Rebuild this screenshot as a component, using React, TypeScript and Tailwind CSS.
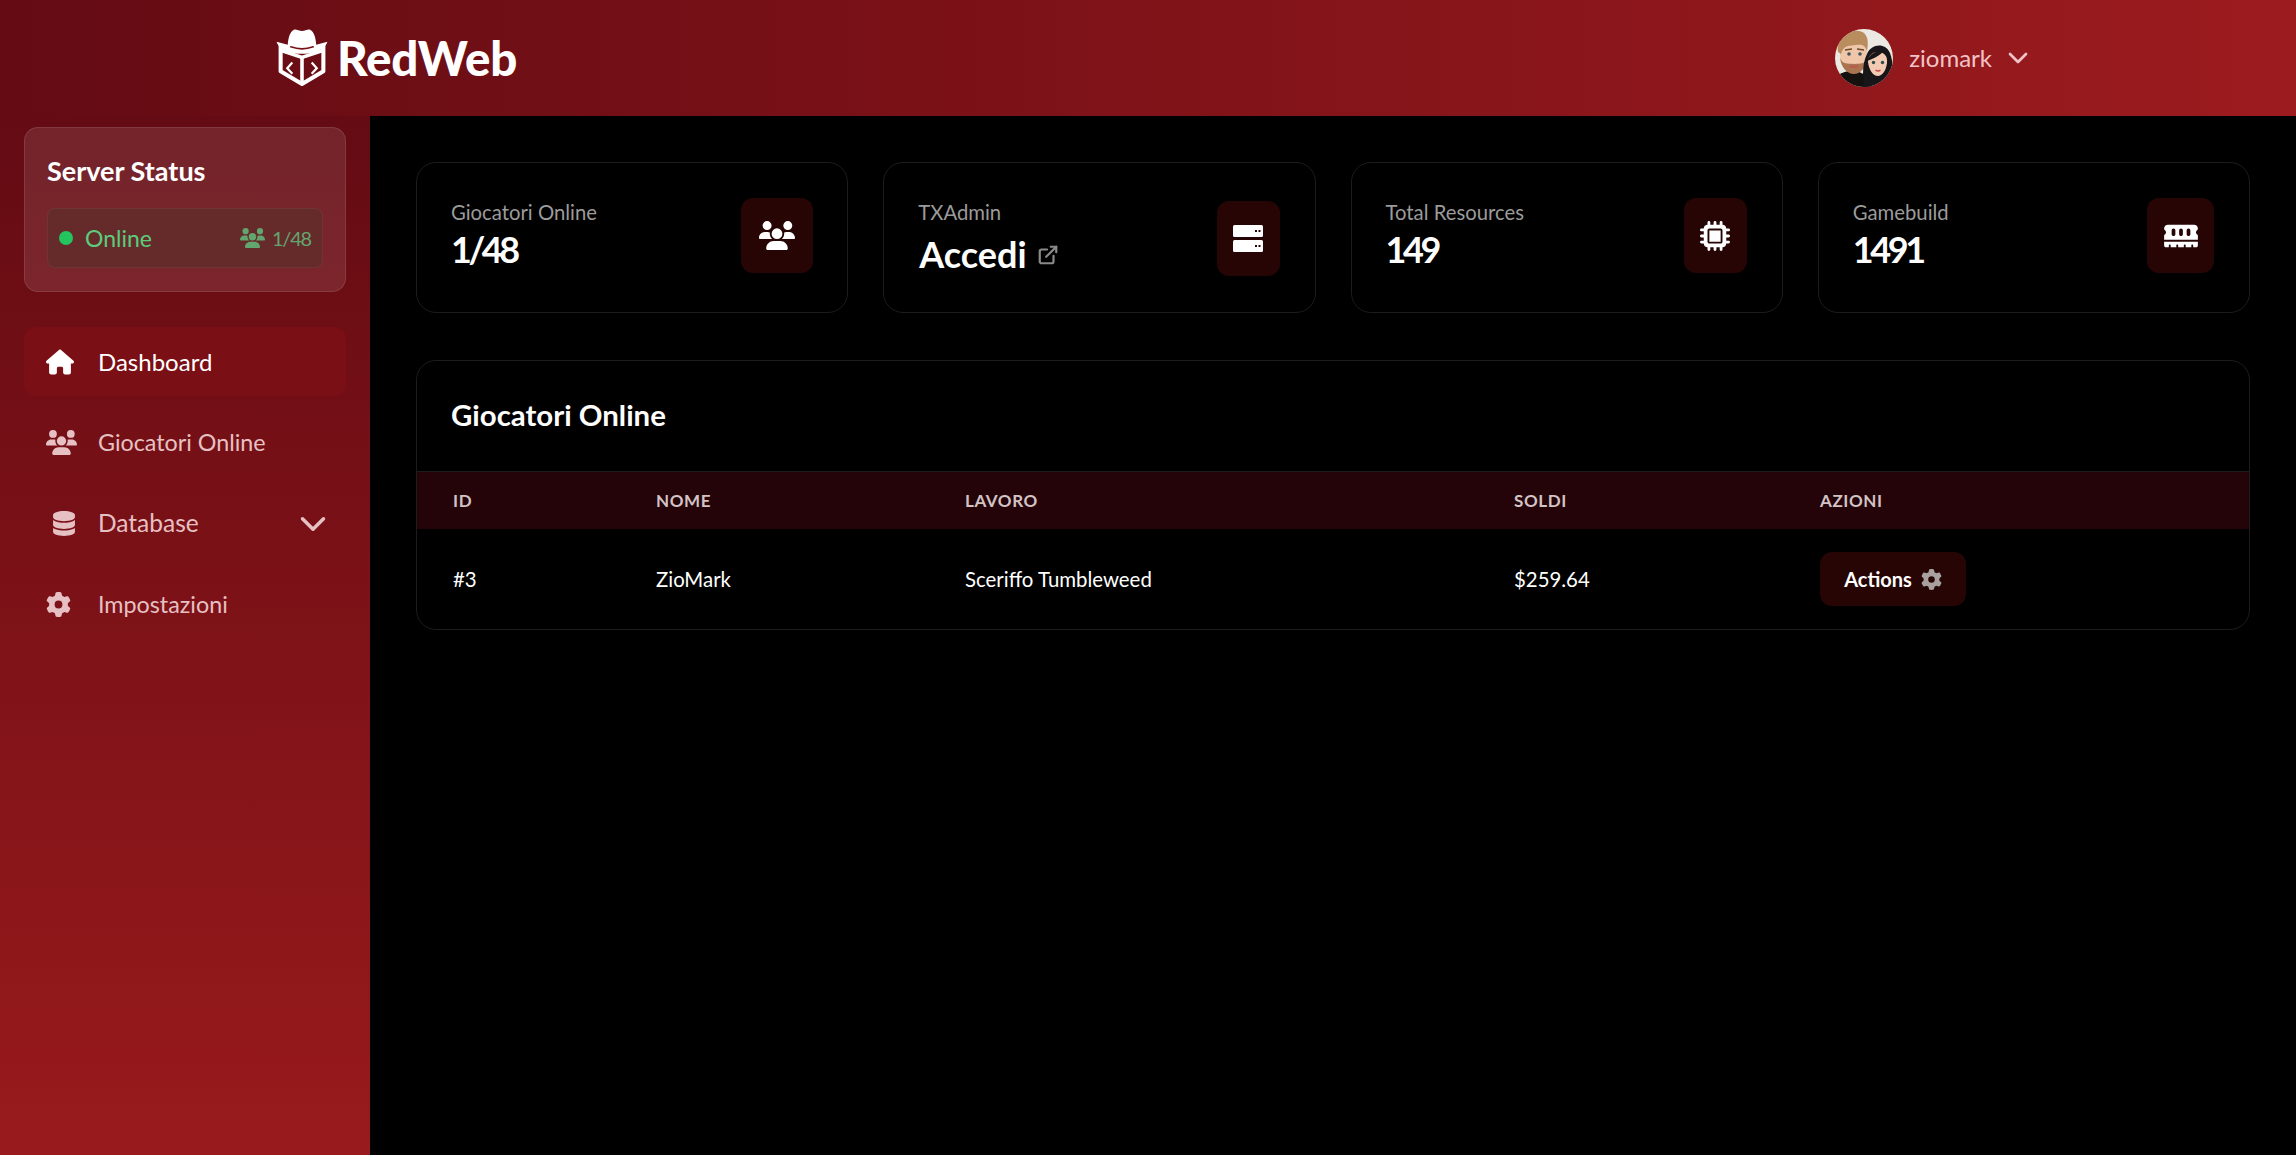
import { ReactNode } from 'react'
import { FaDatabase, FaGear, FaHouse, FaMemory, FaMicrochip, FaUsers } from 'react-icons/fa6'
import { ChevronDown, ExternalLink } from 'lucide-react'

function Logo() {
    return (
        <svg className="w-[52px] h-[58px] shrink-0" viewBox="0 0 50 57" fill="none">
            {/* box */}
            <path d="M4 16V41.5L25 54L46 41.5V16" stroke="#fff" strokeWidth="4" strokeLinejoin="round" />
            <path d="M25 28V54" stroke="#fff" strokeWidth="3.5" />
            <path d="M4 21L25 28L46 21" stroke="#fff" strokeWidth="3.5" />
            <path d="M15.5 33L10.5 38.5L15.5 44" stroke="#fff" strokeWidth="2.2" />
            <path d="M34.5 33L39.5 38.5L34.5 44" stroke="#fff" strokeWidth="2.2" />
            {/* hat */}
            <path
                d="M0 12.5L11 15.5C11.5 9 13 3 17 .8C19 -.2 22 2 25 2C28 2 31 -.2 33 .8C37 3 38.5 9 39 15.5L50 12.5C48 18 44 21 38 22.5C30 25 20 25 12 22.5C6 21 2 18 0 12.5Z"
                fill="#fff"
            />
            <path d="M14 17.5Q25 21.5 36 17.5" stroke="#7a0f16" strokeWidth="1.6" strokeLinecap="round" />
        </svg>
    )
}

function Avatar() {
    return (
        <svg className="w-[58px] h-[58px] rounded-full shrink-0" viewBox="0 0 58 58">
            <rect width="58" height="58" fill="#ece9e2" />
            {/* man */}
            <path d="M2 58V47C7 43 12 42 18 42C24 42 30 45 35 51L37 58Z" fill="#15110f" />
            <path d="M5 25C5 14 13 9 20 9C27 9 32 15 32 25C32 36 27 43 19 43C11 43 5 36 5 25Z" fill="#f0c6a8" />
            <path d="M5 29C6 38 12 45 19 45C26 45 31 38 32 29C30 36 26 34 19 35C12 34 8 36 5 29Z" fill="#a9744f" />
            <path d="M15 37Q19 39 23 37" stroke="#c2524e" strokeWidth="1.6" fill="none" />
            <path d="M3 23C1 10 13 0 24 2C33 3 34 13 32 22C30 16 27 15 21 16C15 17 9 15 6 25Z" fill="#b98d5e" />
            <path d="M10 21L17 20M22 20L29 21" stroke="#6b4a2c" strokeWidth="1.4" />
            <circle cx="14" cy="25" r="1.8" fill="#3a5560" />
            <circle cx="25" cy="25" r="1.8" fill="#3a5560" />
            {/* woman */}
            <path d="M29 58C27 44 28 33 32 25C36 15 50 13 55 24C59 34 58 48 56 58Z" fill="#181618" />
            <path d="M33 33C33 26 38 23 43 23C49 23 53 27 52 34C51 42 47 47 43 47C38 47 34 41 33 33Z" fill="#f3cbb3" />
            <path d="M32 32C34 26 40 21 48 23C44 27 38 30 32 32Z" fill="#181618" />
            <circle cx="38.5" cy="33.5" r="1.7" fill="#2f4a4d" />
            <circle cx="47.5" cy="33.5" r="1.7" fill="#2f4a4d" />
            <path d="M40.5 41Q43 43 45.5 41" stroke="#c9474f" strokeWidth="1.5" fill="none" />
        </svg>
    )
}

function ServerIcon() {
    return (
        <svg className="w-[30px] h-[27px]" viewBox="0 0 30 27">
            <rect y="0" width="30" height="12" rx="1.5" fill="#fff" />
            <rect y="15" width="30" height="12" rx="1.5" fill="#fff" />
            <rect x="22" y="5" width="2" height="2" fill="#270505" />
            <rect x="25.5" y="5" width="2" height="2" fill="#270505" />
            <rect x="22" y="20" width="2" height="2" fill="#270505" />
            <rect x="25.5" y="20" width="2" height="2" fill="#270505" />
        </svg>
    )
}

function Header() {
    return (
        <header className="h-[116px] shrink-0 flex items-center bg-gradient-to-r from-[#640b13] to-[#9c1b1e]">
            <div className="ml-[276px] flex items-center gap-[9px]">
                <Logo />
                <span className="text-[47.5px] leading-none font-black text-white tracking-[-0.2px]">RedWeb</span>
            </div>
            <div className="ml-auto mr-[262px] flex items-center">
                <Avatar />
                <span className="ml-[16px] text-[24px] font-normal text-[#f2c4c8]">ziomark</span>
                <ChevronDown className="ml-[10px] w-[32px] h-[32px] text-[#f2c4c8]" strokeWidth={2} />
            </div>
        </header>
    )
}

function ServerStatus() {
    return (
        <div className="h-[165px] rounded-[14px] border border-white/10 bg-white/10 px-[22px] pt-[25px]">
            <h3 className="text-[27px] leading-[36px] font-bold text-white">Server Status</h3>
            <div className="mt-[19px] h-[60px] rounded-[8px] border border-white/5 bg-[#652b2b] flex items-center pl-[11px] pr-[11px]">
                <span className="w-[14px] h-[14px] rounded-full bg-[#22c55e]" />
                <span className="ml-[12px] text-[23px] text-[#5ccb7c]">Online</span>
                <FaUsers className="ml-auto w-[25px] h-[20px] text-[#63a56e]" />
                <span className="ml-[7px] text-[20px] tracking-[-1.2px] text-[#63a56e]">1/48</span>
            </div>
        </div>
    )
}

interface NavItemProps {
    label: string
    icon: ReactNode
    active?: boolean
    chevron?: boolean
    textClass?: string
}

function NavItem({ label, icon, active, chevron, textClass = 'text-[23.3px]' }: NavItemProps) {
    return (
        <div className={`h-[69px] rounded-[12px] flex items-center pl-[22px] pr-[12px] ${active ? 'bg-[#7a0f15] text-white' : 'text-[#e7c0c3]'}`}>
            <span className="w-[52px] flex items-center">{icon}</span>
            <span className={textClass}>{label}</span>
            {chevron && <ChevronDown className="ml-auto w-[42px] h-[42px]" strokeWidth={2} />}
        </div>
    )
}

function Sidebar() {
    return (
        <aside className="w-[370px] shrink-0 flex flex-col bg-gradient-to-b from-[#640b13] to-[#991a1c] px-[24px] pt-[11px]">
            <ServerStatus />
            <nav className="mt-[35px] flex flex-col gap-[12px]">
                <NavItem active label="Dashboard" textClass="text-[24px]" icon={<FaHouse className="w-[28px] h-[26px]" />} />
                <NavItem label="Giocatori Online" icon={<FaUsers className="w-[31px] h-[25px]" />} />
                <NavItem chevron label="Database" textClass="text-[24.5px]" icon={<FaDatabase className="ml-[7px] w-[22px] h-[25px]" />} />
                <NavItem label="Impostazioni" icon={<FaGear className="w-[25px] h-[25px]" />} />
            </nav>
        </aside>
    )
}

interface StatCardProps {
    label: string
    value: string
    icon: ReactNode
    boxClass: string
    link?: boolean
}

function StatCard({ label, value, icon, boxClass, link }: StatCardProps) {
    return (
        <div className="h-[151px] rounded-[20px] border border-[#1c1c1c] flex items-start justify-between pl-[34px] pr-[35px] pt-[35px]">
            <div>
                <div className="text-[20.3px] leading-[28px] text-[#9b9b9b]">{label}</div>
                {link ? (
                    <div className="mt-[6px] flex items-center gap-[10px] text-white">
                        <span className="pl-[1px] text-[36px] leading-[44px] font-bold">{value}</span>
                        <ExternalLink className="w-[22px] h-[22px] text-[#8a8a8a] mt-[2px]" strokeWidth={2.4} />
                    </div>
                ) : (
                    <div className="mt-[2px] text-[36px] leading-[42px] font-bold tracking-[-3.4px] text-white">{value}</div>
                )}
            </div>
            <div className={`rounded-[12px] bg-[#270505] flex items-center justify-center text-white ${boxClass}`}>{icon}</div>
        </div>
    )
}

function PlayersTable() {
    const headCell = 'pl-[36px] text-[17px] font-bold tracking-[0.6px] text-[#d3c3c4]'
    const bodyCell = 'pl-[36px] text-[20.4px] text-white'
    return (
        <section className="mt-[47px] rounded-[20px] border border-[#1c1c1c] overflow-hidden">
            <div className="h-[110px] flex items-center pl-[34px] pb-[1px]">
                <h2 className="text-[29.4px] font-bold text-white">Giocatori Online</h2>
            </div>
            <div className="h-[58px] grid grid-cols-[203px_309px_549px_306px_1fr] items-center bg-[#240408] border-t border-[#1c1c1c]">
                <div className={headCell}>ID</div>
                <div className={headCell}>NOME</div>
                <div className={headCell}>LAVORO</div>
                <div className={headCell}>SOLDI</div>
                <div className={headCell}>AZIONI</div>
            </div>
            <div className="h-[100px] grid grid-cols-[203px_309px_549px_306px_1fr] items-center">
                <div className={bodyCell}>#3</div>
                <div className={bodyCell}>ZioMark</div>
                <div className={bodyCell}>Sceriffo Tumbleweed</div>
                <div className={bodyCell}>$259.64</div>
                <div className="pl-[36px]">
                    <button className="w-[146px] h-[54px] rounded-[12px] bg-[#270505] flex items-center justify-center gap-[9px] text-[20px] font-bold text-white">
                        Actions
                        <FaGear className="w-[21px] h-[21px] text-[#a9a0a0]" />
                    </button>
                </div>
            </div>
        </section>
    )
}

export default function App() {
    return (
        <div className="h-screen flex flex-col overflow-hidden bg-black font-['Lato','Liberation_Sans',sans-serif]">
            <Header />
            <div className="flex-1 flex overflow-hidden">
                <Sidebar />
                <main className="flex-1 pl-[46px] pr-[46px] pt-[46px]">
                    <div className="grid grid-cols-4 gap-[35px]">
                        <StatCard label="Giocatori Online" value="1/48" boxClass="w-[72px] h-[75px] mr-[-1px]" icon={<FaUsers className="w-[36px] h-[29px]" />} />
                        <StatCard link label="TXAdmin" value="Accedi" boxClass="w-[63px] h-[75px] mt-[3px]" icon={<ServerIcon />} />
                        <StatCard label="Total Resources" value="149" boxClass="w-[63px] h-[75px]" icon={<FaMicrochip className="w-[30px] h-[30px]" />} />
                        <StatCard label="Gamebuild" value="1491" boxClass="w-[67px] h-[75px]" icon={<FaMemory className="w-[34px] h-[30px]" />} />
                    </div>
                    <PlayersTable />
                </main>
            </div>
        </div>
    )
}
